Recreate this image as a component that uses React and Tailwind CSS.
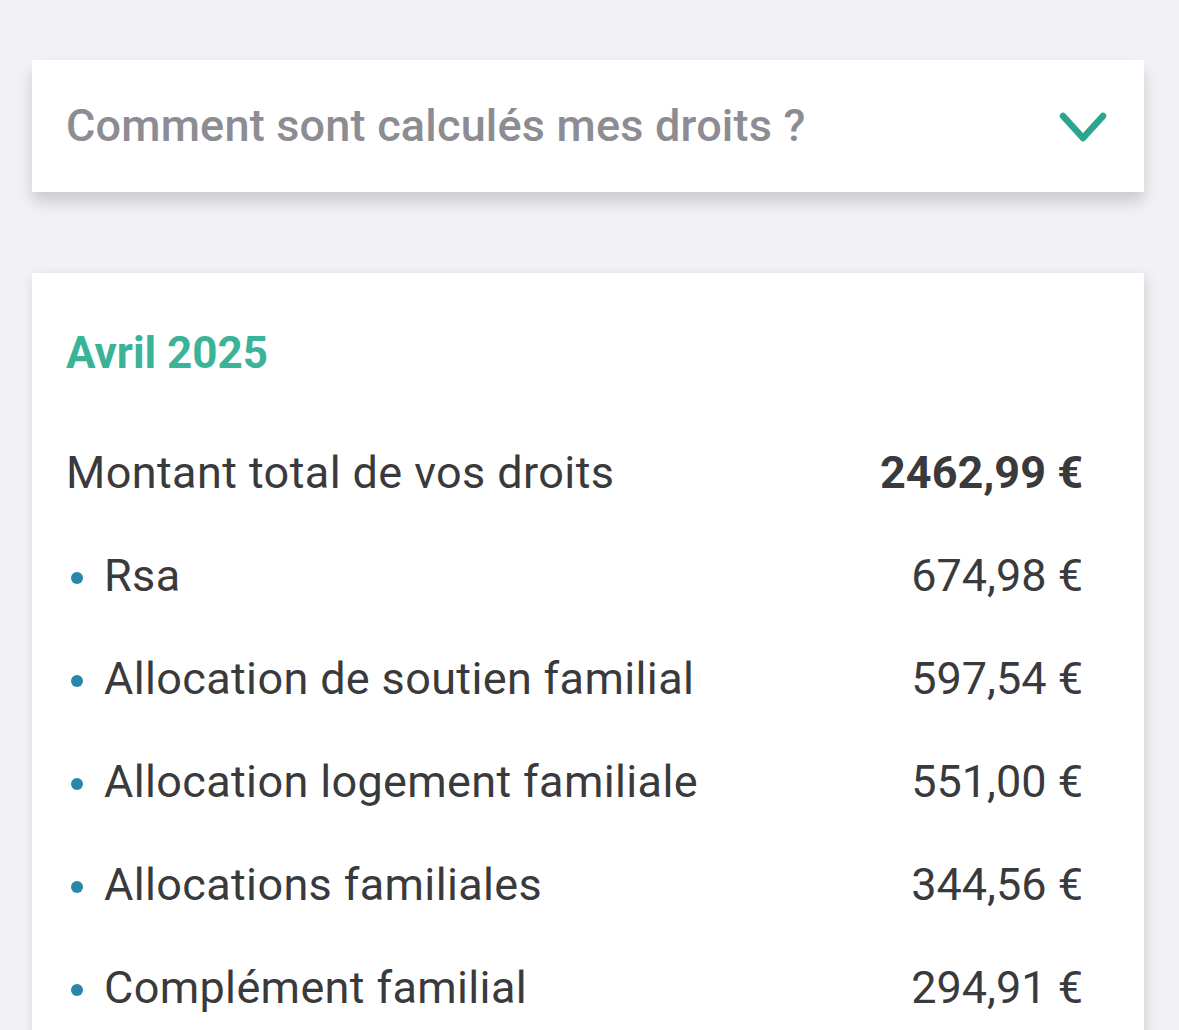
const rows = [
  { label: "Rsa", amount: "674,98 €" },
  { label: "Allocation de soutien familial", amount: "597,54 €" },
  { label: "Allocation logement familiale", amount: "551,00 €" },
  { label: "Allocations familiales", amount: "344,56 €" },
  { label: "Complément familial", amount: "294,91 €" },
];

export default function App() {
  return (
    <div
      className="min-h-[1030px] bg-[#f2f2f6] pt-[60px] px-[32px] overflow-hidden"
      style={{ fontFamily: "Roboto, 'Noto Sans', sans-serif" }}
    >
      {/* Accordion header */}
      <div className="bg-white h-[132px] w-[1112px] flex items-center justify-between pl-[34px] pr-[36px] shadow-[0_10px_14px_rgba(0,0,0,0.16)]">
        <span className="text-[45px] font-medium text-[#8c8c92] tracking-[0.2px]">
          Comment sont calculés mes droits ?
        </span>
        <svg width="50" height="38" viewBox="0 0 50 38" className="text-[#2ba58d] mt-[2px]">
          <polyline
            points="5,8 25,30 45,8"
            fill="none"
            stroke="currentColor"
            strokeWidth="6.5"
            strokeLinecap="round"
            strokeLinejoin="round"
          />
        </svg>
      </div>

      {/* Rights card */}
      <div className="bg-white w-[1112px] mt-[81px] pt-[58px] pl-[34px] pr-[61px] pb-[40px] shadow-[2px_4px_12px_rgba(0,0,0,0.14)]">
        <h2 className="text-[44px] leading-[44px] font-bold text-[#3ab398]">Avril 2025</h2>

        <div className="mt-[46px]">
          <div className="flex justify-between items-center h-[103px] text-[45px] text-[#3a3a3c]">
            <span className="tracking-[0.4px]">Montant total de vos droits</span>
            <span className="font-bold">2462,99 €</span>
          </div>
          {rows.map((r) => (
            <div key={r.label} className="flex justify-between items-center h-[103px] text-[45px] text-[#3a3a3c]">
              <span className="flex items-center tracking-[0.35px]">
                <span className="w-[12px] h-[12px] rounded-full bg-[#2886ab] ml-[5px] mr-[21px] mt-[4px]" />
                {r.label}
              </span>
              <span>{r.amount}</span>
            </div>
          ))}
        </div>
      </div>
    </div>
  );
}
